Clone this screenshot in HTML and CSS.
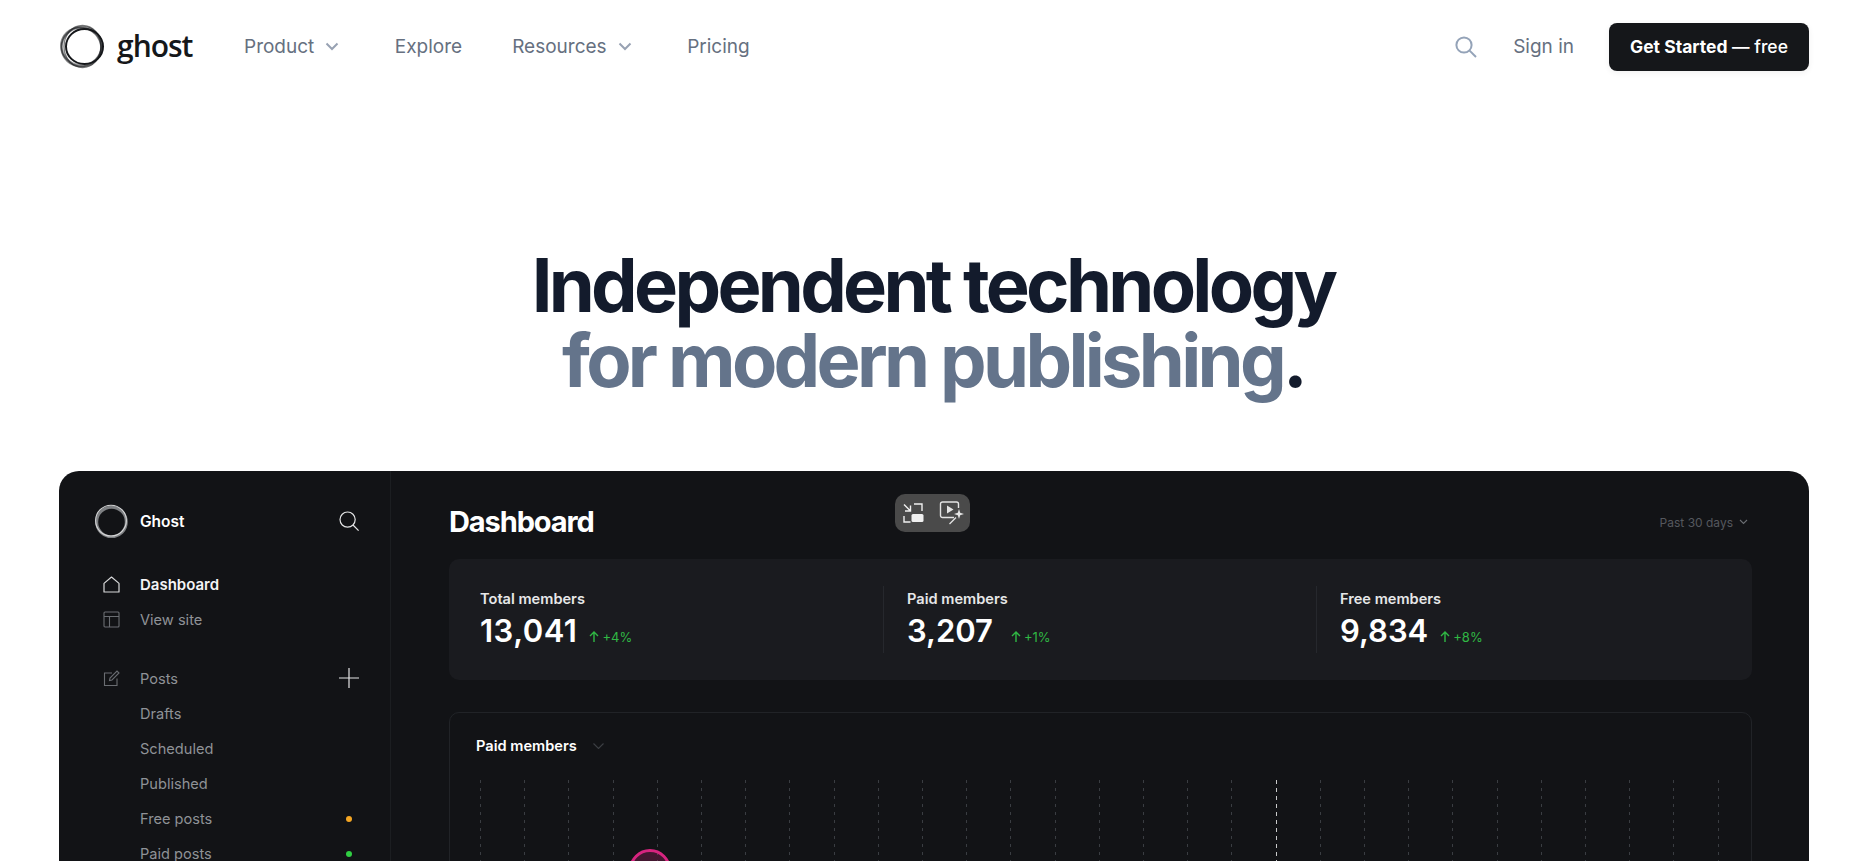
FILE: index.html
```html
<!DOCTYPE html>
<html lang="en">
<head>
  <meta charset="UTF-8">
  <meta name="viewport" content="width=device-width, initial-scale=1.0">
  <title>Ghost: Independent technology for modern publishing</title>
  <link rel="stylesheet" href="styles.css">
</head>
<body>
  <header class="topbar">
    <a class="logo" href="#">
      <svg class="logo-ring" viewBox="0 0 46 46" fill="none" stroke="#15171a">
        <ellipse cx="21" cy="23" rx="20.500" ry="19" stroke-width="1.600" opacity=".5" transform="rotate(35 21 23)"/>
        <ellipse cx="21.500" cy="22.500" rx="20.500" ry="19.500" stroke-width="1.600" opacity=".5" transform="rotate(-35 21.500 22.500)"/>
        <ellipse cx="22.500" cy="22.500" rx="21" ry="18.500" stroke-width="1.400" opacity=".55" transform="rotate(90 22.500 22.500)"/>
        <ellipse cx="21.500" cy="22.500" rx="19.500" ry="18.500" stroke-width="1.600" opacity=".45"/>
        <ellipse cx="24.500" cy="22.500" rx="18.500" ry="17.500" stroke-width="2"/>
      </svg>
      <span class="logo-word">ghost</span>
    </a>
    <nav class="site-nav">
      <a class="site-link has-menu" href="#">Product
        <svg class="chev" viewBox="0 0 14 9" fill="none" stroke="#98a2b3" stroke-width="2"><path d="M1.500 1.500 7 7l5.500-5.500"/></svg>
      </a>
      <a class="site-link" href="#">Explore</a>
      <a class="site-link has-menu" href="#">Resources
        <svg class="chev" viewBox="0 0 14 9" fill="none" stroke="#98a2b3" stroke-width="2"><path d="M1.500 1.500 7 7l5.500-5.500"/></svg>
      </a>
      <a class="site-link" href="#">Pricing</a>
    </nav>
    <div class="topbar-right">
      <svg class="site-search" viewBox="0 0 22 22" fill="none" stroke="#94a3b8" stroke-width="2"><circle cx="9" cy="9" r="7.600"/><path d="m14.600 14.600 6.400 6.400"/></svg>
      <a class="site-link" href="#">Sign in</a>
      <a class="cta" href="#"><b>Get Started</b> — free</a>
    </div>
  </header>

  <section class="hero">
    <h1>Independent technology<br><span class="muted">for modern publishing</span>.</h1>
  </section>

  <section class="demo">
    <aside class="sidebar">
      <div class="brand">
        <svg class="brand-ring" viewBox="0 0 34 34" fill="none">
          <circle cx="17.500" cy="18" r="14.800" stroke="#7d7f82" stroke-width="3"/>
          <circle cx="17" cy="16.600" r="15.400" stroke="#d4d5d6" stroke-width="1.100"/>
        </svg>
        <span class="brand-name">Ghost</span>
        <svg class="side-search" viewBox="0 0 20 20" fill="none" stroke="#e4e5e6" stroke-width="1.200"><circle cx="8.600" cy="8.600" r="7.600"/><path d="m14 14 5.600 5.600"/></svg>
      </div>

      <ul class="menu">
        <li class="menu-row active">
          <svg class="menu-icon" viewBox="0 0 17 17" fill="none" stroke="#d8d9da" stroke-width="1.200"><path d="M1 7.400 8.500 1 16 7.400V16H1z" stroke-linejoin="round"/></svg>
          <span>Dashboard</span>
        </li>
        <li class="menu-row">
          <svg class="menu-icon" viewBox="0 0 17 17" fill="none" stroke="#6a6d72" stroke-width="1.100"><rect x="1" y="1" width="15" height="15" rx="1"/><path d="M1 5.500h15M6.500 5.500V16"/></svg>
          <span>View site</span>
        </li>
      </ul>

      <ul class="menu posts">
        <li class="menu-row">
          <svg class="menu-icon" viewBox="0 0 17 17" fill="none" stroke="#6a6d72" stroke-width="1.100"><path d="M9 3H1.500v12.500H14V8.500"/><path d="M6.500 10.500 7 8l7-7 2 2-7 7z"/></svg>
          <span>Posts</span>
          <svg class="row-end plus" viewBox="0 0 20 20" stroke="#e4e5e6" stroke-width="1.200"><path d="M0 10h20M10 0v20"/></svg>
        </li>
        <li class="menu-row sub"><span>Drafts</span></li>
        <li class="menu-row sub"><span>Scheduled</span></li>
        <li class="menu-row sub"><span>Published</span></li>
        <li class="menu-row sub"><span>Free posts</span><i class="row-end dot orange"></i></li>
        <li class="menu-row sub"><span>Paid posts</span><i class="row-end dot green"></i></li>
      </ul>
    </aside>

    <main class="board">
      <div class="board-head">
        <h2>Dashboard</h2>
        <span class="range">Past 30 days
          <svg class="range-chev" viewBox="0 0 9 6" fill="none" stroke="#6a6d72" stroke-width="1.100"><path d="m1 1 3.500 3.500L8 1"/></svg>
        </span>
      </div>

      <div class="stats">
        <div class="stat">
          <div class="stat-label">Total members</div>
          <div class="stat-line">
            <span class="stat-value">13,041</span>
            <span class="delta"><svg class="up" viewBox="0 0 10 11" fill="none" stroke="#30b844" stroke-width="1.400"><path d="M5 11V1M1 5l4-4 4 4"/></svg>+4%</span>
          </div>
        </div>
        <div class="stat">
          <div class="stat-label">Paid members</div>
          <div class="stat-line">
            <span class="stat-value">3,207</span>
            <span class="delta wide"><svg class="up" viewBox="0 0 10 11" fill="none" stroke="#30b844" stroke-width="1.400"><path d="M5 11V1M1 5l4-4 4 4"/></svg>+1%</span>
          </div>
        </div>
        <div class="stat">
          <div class="stat-label">Free members</div>
          <div class="stat-line">
            <span class="stat-value">9,834</span>
            <span class="delta"><svg class="up" viewBox="0 0 10 11" fill="none" stroke="#30b844" stroke-width="1.400"><path d="M5 11V1M1 5l4-4 4 4"/></svg>+8%</span>
          </div>
        </div>
      </div>

      <div class="panel">
        <div class="panel-title">Paid members
          <svg class="panel-chev" viewBox="0 0 11 6" fill="none" stroke="#3c3f44" stroke-width="1.100"><path d="m.5.500 5 5 5-5"/></svg>
        </div>
        <div class="chart">
          <i></i><i></i><i></i><i></i><i></i><i></i><i></i><i></i><i></i><i></i>
          <i></i><i></i><i></i><i></i><i></i><i></i><i></i><i></i><i class="now"></i><i></i>
          <i></i><i></i><i></i><i></i><i></i><i></i><i></i><i></i><i></i>
          <span class="marker"></span>
        </div>
      </div>
    </main>

    <div class="player">
      <svg class="player-icon" viewBox="0 0 22 22" fill="none" stroke="#f0f0f0" stroke-width="1.400">
        <path d="M2 2.500 8.500 9M3 9h5.500V3.500M12 2h8v7M8.500 20H2v-6"/>
        <rect x="9.500" y="12" width="12" height="8" rx="1.500" fill="#f0f0f0" stroke="none"/>
      </svg>
      <svg class="player-icon magic" viewBox="0 0 26 24" fill="none" stroke="#e4e4e4" stroke-width="1.400">
        <path d="M15 16.500H3.500a2 2 0 0 1-2-2V3a2 2 0 0 1 2-2h14a2 2 0 0 1 2 2v4"/>
        <path d="M8 4.500v8l6.500-4z" fill="#e4e4e4" stroke="none"/>
        <path d="M20 8l1.200 3.800 3.800 1.200-3.800 1.200L20 18l-1.200-3.800L15 13l3.800-1.200z" fill="#e4e4e4" stroke="none"/>
        <path d="M17 16.500 10.500 23" stroke-width="1.200"/>
      </svg>
    </div>
  </section>
</body>
</html>
```

FILE: styles.css
```css
html, body {
  height: 100vh;
  margin: 0;
  overflow: hidden;
}
body {
  font-family: Inter, "Liberation Sans", sans-serif;
  background: #fff;
  color: #15171a;
}
a {
  color: inherit;
  text-decoration: none;
}
ul {
  list-style: none;
  margin: 0;
  padding: 0;
}

/* top bar */
.topbar {
  display: flex;
  align-items: center;
  height: 94px;
  padding: 0 49px 0 60px;
}
.logo {
  display: flex;
  align-items: center;
  gap: 11px;
  width: 184px;
}
.logo-ring {
  width: 46px;
  height: 46px;
}
.logo-word {
  font-family: "Open Sans", sans-serif;
  font-size: 30px;
  font-weight: 600;
  letter-spacing: -1px;
  line-height: 46px;
  margin-top: -3px;
}
.site-nav {
  display: flex;
  align-items: center;
  gap: 50px;
}
.site-link {
  margin-bottom: 1px;
  font-size: 19px;
  color: #667080;
}
.has-menu {
  display: flex;
  align-items: center;
  gap: 11px;
  margin-right: 5.5px;
}
.chev {
  width: 14px;
  height: 9px;
}
.topbar-right {
  display: flex;
  align-items: center;
  margin-left: auto;
}
.site-search {
  width: 22px;
  height: 22px;
  margin-right: 36px;
}
.cta {
  width: 200px;
  height: 48px;
  margin-left: 35px;
  border-radius: 8px;
  background: #15171a;
  color: #fff;
  font-size: 17.5px;
  font-weight: 500;
  line-height: 47px;
  text-align: center;
  box-shadow: 0 2px 6px rgba(0,0,0,0.06);
}
.cta b {
  font-weight: 700;
}

/* hero */
.hero {
  height: 377px;
  padding: 154px 0 0 8px;
  box-sizing: border-box;
}
h1 {
  margin: 0;
  font-size: 74px;
  font-weight: 700;
  line-height: 75px;
  letter-spacing: -3.7px;
  text-align: center;
  color: #131b2c;
}
.muted {
  color: #64748b;
}

/* dashboard preview */
.demo {
  position: relative;
  display: flex;
  height: calc(100vh - 471px);
  margin: 0 49px 0 59px;
  border-radius: 20px 20px 0 0;
  background: #121316;
  color: #fff;
  overflow: hidden;
}
.sidebar {
  flex: 0 0 332px;
  box-sizing: border-box;
  padding: 33px 31px 0 0;
  border-right: 1px solid #1c1e21;
}
.brand {
  display: flex;
  align-items: center;
  gap: 12px;
  height: 34px;
  margin-left: 35px;
}
.brand-ring {
  width: 34px;
  height: 34px;
}
.brand-name {
  font-size: 15.5px;
  font-weight: 600;
}
.side-search {
  width: 20px;
  height: 20px;
  margin-left: auto;
}
.menu {
  margin-top: 29px;
  padding-left: 44px;
}
.menu.posts {
  margin-top: 24px;
}
.menu-row {
  display: flex;
  align-items: center;
  gap: 20px;
  height: 35px;
  font-size: 14.6px;
  color: #8f9297;
}
.menu-row.active {
  color: #f4f4f5;
  font-size: 15px;
  font-weight: 600;
}
.menu-row.sub {
  padding-left: 37px;
}
.menu-icon {
  flex: none;
  width: 17px;
  height: 17px;
}
.row-end {
  margin-left: auto;
}
.plus {
  width: 20px;
  height: 20px;
  margin-bottom: 2px;
}
.dot {
  width: 6px;
  height: 6px;
  margin-right: 7px;
  border-radius: 50%;
}
.orange {
  background: #f5a623;
}
.green {
  background: #30cf43;
}

.board {
  flex: 1;
  min-width: 0;
  padding: 33px 57px 0 58px;
}
.board-head {
  display: flex;
  align-items: center;
  justify-content: space-between;
  height: 36px;
  margin-bottom: 19px;
}
h2 {
  margin: 0 0 2px;
  font-size: 29px;
  font-weight: 700;
  letter-spacing: -1.1px;
}
.range {
  display: flex;
  align-items: center;
  gap: 6px;
  margin-right: 4px;
  font-size: 12px;
  color: #55585e;
}
.range-chev {
  width: 9px;
  height: 6px;
}
.stats {
  display: grid;
  grid-template-columns: 434px 433px 1fr;
  padding: 27px 0;
  border-radius: 10px;
  background: #1a1b1f;
}
.stat {
  height: 67px;
  padding-left: 23px;
  border-left: 1px solid #26282d;
}
.stat:first-child {
  padding-left: 31px;
  border-left: 0;
}
.stat:first-child .stat-value {
  letter-spacing: 0.5px;
}
.stat-label {
  padding-top: 1px;
  font-size: 14.6px;
  font-weight: 600;
  line-height: 24px;
  color: #e6e7e8;
}
.stat-line {
  display: flex;
  align-items: baseline;
}
.stat-value {
  font-size: 31px;
  font-weight: 600;
  line-height: 40px;
}
.delta {
  display: flex;
  align-items: center;
  gap: 3px;
  margin-left: 12px;
  font-size: 13px;
  color: #30b844;
}
.delta.wide {
  margin-left: 18px;
}
.up {
  width: 10px;
  height: 11px;
}
.panel {
  margin-top: 32px;
  height: 300px;
  border: 1px solid #212327;
  border-radius: 10px;
}
.panel-title {
  display: flex;
  align-items: center;
  gap: 16px;
  margin: 24px 0 0 26px;
  font-size: 14.6px;
  font-weight: 600;
  line-height: 18px;
}
.panel-chev {
  width: 11px;
  height: 6px;
}
.chart {
  position: relative;
  display: flex;
  justify-content: space-between;
  height: 250px;
  margin: 25px 32px 0 30px;
}
.chart i {
  width: 1px;
  background: repeating-linear-gradient(to bottom, #3a3d42 0 3px, transparent 3px 8px);
}
.chart i.now {
  background: repeating-linear-gradient(to bottom, #c9cacb 0 4px, transparent 4px 8px);
}
.marker {
  position: absolute;
  left: 149px;
  top: 69px;
  box-sizing: border-box;
  width: 42px;
  height: 42px;
  border: 3px solid #d6247f;
  border-radius: 50%;
  background: rgba(214,36,127,0.25);
}
.player {
  position: absolute;
  left: 836px;
  top: 23px;
  display: flex;
  align-items: center;
  gap: 15px;
  box-sizing: border-box;
  width: 75px;
  height: 38px;
  padding-left: 7px;
  border-radius: 10px;
  background: #4a4a4a;
}
.player-icon {
  width: 22px;
  height: 22px;
}
.player-icon.magic {
  width: 26px;
  height: 24px;
}
```
